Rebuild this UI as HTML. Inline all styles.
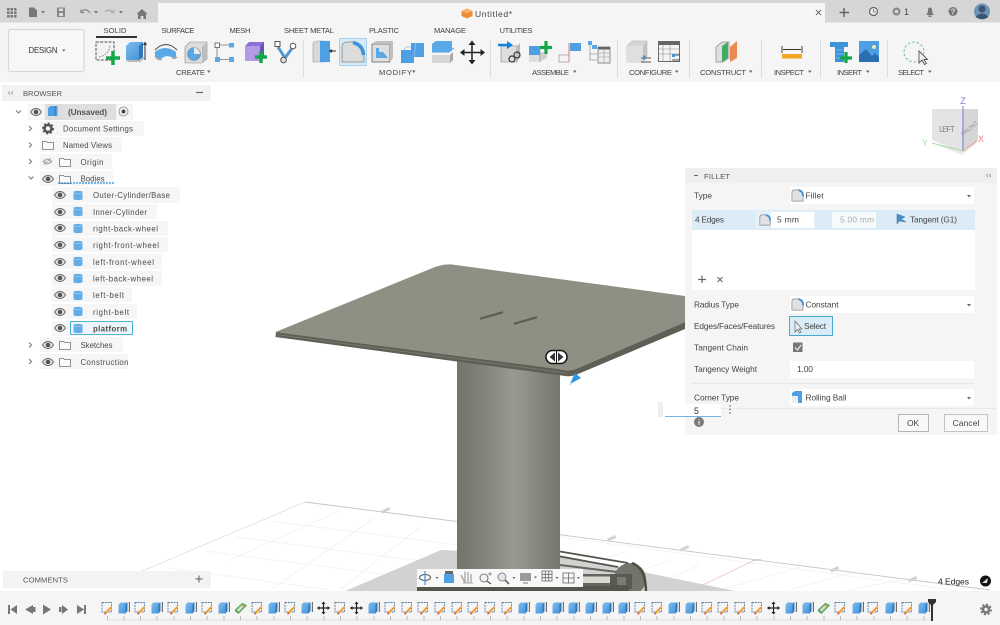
<!DOCTYPE html>
<html><head><meta charset="utf-8"><title>Untitled</title>
<style>
html,body{margin:0;padding:0;background:#fff;overflow:hidden}
svg{display:block}
text{font-family:"Liberation Sans",sans-serif;fill:#444;font-size:7.6px}
.m{text-anchor:middle}
.b{font-size:7.800px;fill:#4a4a4a}
.p{font-size:8.300px;fill:#444}
</style></head><body>
<svg width="1000" height="625" viewBox="0 0 1000 625" xmlns="http://www.w3.org/2000/svg">
<defs>
<linearGradient id="col" x1="0" x2="1" y1="0" y2="0"><stop offset="0" stop-color="#74746c"/><stop offset=".2" stop-color="#7f7f76"/><stop offset=".55" stop-color="#9a9a90"/><stop offset=".8" stop-color="#86867c"/><stop offset="1" stop-color="#77776f"/></linearGradient>
<linearGradient id="blue" x1="0" x2="1" y1="0" y2="1"><stop offset="0" stop-color="#7dbdee"/><stop offset="1" stop-color="#3f8fd6"/></linearGradient>
<symbol id="s" viewBox="0 0 14 14"><rect x="1.5" y="1.5" width="9.5" height="9.5" fill="none" stroke="#5c7fa6" stroke-width=".9" stroke-dasharray="2 .8"/><path d="M5 12L11 6" stroke="#f0a030" stroke-width="2"/><path d="M4 13l1.5-1" stroke="#d9402a" stroke-width="1.5"/></symbol>
<symbol id="e" viewBox="0 0 14 14"><path d="M2 3.5L4 1.500H11V10L9 12.500H2Z" fill="url(#blue)"/><path d="M11 1.500V10L9 12.500V3.500Z" fill="#2f78b8"/><path d="M12.800 1V11" stroke="#444" stroke-width=".9"/></symbol>
<symbol id="g" viewBox="0 0 14 14"><path d="M2 9L9 2.500L12.500 4.500L5 12Z" fill="#d8d8c8" stroke="#4aa858" stroke-width="1.300"/><path d="M8 3.500L11 6" stroke="#e09040" stroke-width="1.300"/><path d="M2 9.500L5 12" stroke="#3b9a4c" stroke-width="1.500"/></symbol>
<symbol id="mv" viewBox="0 0 14 14"><path d="M7 1V13M1 7H13" stroke="#222" stroke-width="1.200"/><path d="M7 .5L9 3H5ZM7 13.500L9 11H5ZM.5 7L3 5V9ZM13.500 7L11 5V9Z" fill="#222"/></symbol>
<symbol id="eye" viewBox="0 0 12 8"><path d="M.5 4C2.500 1 4 .5 6 .5S9.500 1 11.500 4C9.500 7 8 7.500 6 7.500S2.500 7 .5 4Z" fill="#e8e8e8" stroke="#666" stroke-width="1"/><circle cx="6" cy="4" r="2.300" fill="#555"/></symbol>
<symbol id="cyl" viewBox="0 0 10 11"><path d="M.5 2C.5.500 9.500.500 9.500 2V9C9.500 10.500.5 10.500.5 9Z" fill="#63ace6"/><path d="M.5 2.500C2 4 8 4 9.500 2.500" fill="none" stroke="#9fd0f4" stroke-width=".7"/></symbol>
<symbol id="fold" viewBox="0 0 12 10"><path d="M.5 1.500H4.500L5.500 2.500H11.500V9.500H.5Z" fill="#fafafa" stroke="#777" stroke-width=".8"/></symbol>
<symbol id="fil" viewBox="0 0 14 14"><path d="M1 13V4Q1 1 4 1H8Q13 2 13 8V13Z" fill="#e2e2e2" stroke="#8a8a8a" stroke-width=".8"/><path d="M8 1.300Q13 2 13 8" fill="none" stroke="#3f93d8" stroke-width="2"/></symbol>
</defs>

<!-- background top -->
<rect width="1000" height="82" fill="#f5f5f5"/>
<rect width="1000" height="22.500" fill="#d6d6d6"/>
<rect x="158" y="3" width="667" height="20" fill="#f6f6f6"/>

<!-- top bar left icons -->
<g fill="#777">
<rect x="7" y="8" width="2.500" height="2.500"/><rect x="10.500" y="8" width="2.500" height="2.500"/><rect x="14" y="8" width="2.500" height="2.500"/>
<rect x="7" y="11.500" width="2.500" height="2.500"/><rect x="10.500" y="11.500" width="2.500" height="2.500"/><rect x="14" y="11.500" width="2.500" height="2.500"/>
<rect x="7" y="15" width="2.500" height="2.500"/><rect x="10.500" y="15" width="2.500" height="2.500"/><rect x="14" y="15" width="2.500" height="2.500"/>
<path d="M29 7.500H34L37 10.500V17H29Z"/><path d="M41 11H45L43 13.500Z"/>
<path d="M57 7.500H65V17H57Z" fill="#888"/><rect x="59" y="8.500" width="4" height="2.500" fill="#ddd"/><rect x="59" y="13" width="4" height="3" fill="#ddd"/>
<path d="M94 11H98L96 13.500ZM119 11H123L121 13.500Z"/>
</g>
<path d="M81 12Q86 7 90 13M81 9.500V12.500H84" fill="none" stroke="#888" stroke-width="1.200"/>
<path d="M114 13Q109 8 105 12M114 9.500V12.500H111" fill="none" stroke="#aaa" stroke-width="1.200"/>
<path d="M142 9L147.500 14H146V19H143.500V16H140.500V19H138V14H136.500Z" fill="#777"/>

<!-- title -->
<path d="M467 8.500L472.500 11V16L467 18.500L461.500 16V11Z" fill="#ef8e30"/><path d="M461.500 11L467 13.500L472.500 11L467 8.500Z" fill="#f7b267"/>
<text x="475" y="17" style="font-size:8.500px" textLength="37">Untitled*</text>
<path d="M816 10L821 15M821 10L816 15" stroke="#666" stroke-width=".9"/>

<!-- top right -->
<path d="M844 8V17M839.500 12.500H849" stroke="#666" stroke-width="1.500"/>
<circle cx="873.500" cy="11.500" r="4" fill="#ececec" stroke="#666" stroke-width="1.200"/><path d="M873.500 9V12H876" stroke="#666" fill="none" stroke-width=".8"/>
<circle cx="896.500" cy="11.500" r="4" fill="#8a8a8a"/><circle cx="896.500" cy="11.500" r="1.800" fill="#d6d6d6"/>
<text x="904" y="15" style="font-size:9px">1</text>
<path d="M926 15Q928 13 928 10Q928 7.500 930 7.500Q932 7.500 932 10Q932 13 934 15ZM928.500 15.500H931.500V17H928.500Z" fill="#777"/>
<circle cx="953" cy="11.500" r="4.500" fill="#777"/><text x="953" y="14.500" class="m" style="font-size:8px;fill:#ddd;font-weight:bold">?</text>
<circle cx="982" cy="11.500" r="8" fill="#6d93b8"/><circle cx="982" cy="9" r="3.500" fill="#3c5470"/><path d="M975.500 17Q982 10 988.500 17Q982 21 975.500 17Z" fill="#3c5470"/>

<!-- design button -->
<rect x="8.500" y="29.500" width="75.500" height="42" rx="2" fill="#f7f7f7" stroke="#d8d8d8" stroke-width="1.200"/>
<text x="28.500" y="53" style="font-size:7.800px;fill:#333" textLength="29">DESIGN</text>
<path d="M62 49.500H65.500L63.750 51.500Z" fill="#666"/>

<!-- tabs -->
<text x="103.500" y="33" textLength="23">SOLID</text>
<rect x="96" y="36" width="41" height="2" fill="#333"/>
<text x="161.500" y="33" textLength="33">SURFACE</text>
<text x="229.500" y="33" textLength="21">MESH</text>
<text x="284" y="33" textLength="50">SHEET METAL</text>
<text x="369" y="33" textLength="30">PLASTIC</text>
<text x="434" y="33" textLength="32">MANAGE</text>
<text x="499.500" y="33" textLength="33">UTILITIES</text>

<!-- group labels -->
<text x="176" y="75" textLength="29">CREATE</text><path d="M207 70.500H210.500L208.750 73Z" fill="#666"/>
<text x="379" y="75" textLength="33">MODIFY</text><path d="M412 70.500H415.500L413.750 73Z" fill="#666"/>
<text x="532" y="75" textLength="37">ASSEMBLE</text><path d="M573 70.500H576.500L574.750 73Z" fill="#666"/>
<text x="629" y="75" textLength="43">CONFIGURE</text><path d="M675 70.500H678.500L676.750 73Z" fill="#666"/>
<text x="700" y="75" textLength="46">CONSTRUCT</text><path d="M749 70.500H752.500L750.750 73Z" fill="#666"/>
<text x="774" y="75" textLength="30">INSPECT</text><path d="M808 70.500H811.500L809.750 73Z" fill="#666"/>
<text x="837" y="75" textLength="25">INSERT</text><path d="M866 70.500H869.500L867.750 73Z" fill="#666"/>
<text x="898" y="75" textLength="26">SELECT</text><path d="M928 70.500H931.500L929.750 73Z" fill="#666"/>

<!-- dividers -->
<g stroke="#dcdcdc" stroke-width="1"><path d="M303.500 40V78M490.500 40V78M617.500 40V78M689.500 40V78M761.500 40V78M820.500 40V78M887.500 40V78"/></g>

<!-- CREATE icons -->
<rect x="96" y="42" width="18" height="18" fill="#f2f2f2" stroke="#555" stroke-width="1" stroke-dasharray="3 1.200"/>
<path d="M99 57Q109 55 110 45" fill="none" stroke="#888" stroke-width=".8" stroke-dasharray="2 1"/>
<path d="M113 50V64M106 57H120" stroke="#12a84a" stroke-width="3.500" transform="translate(0,1)"/>
<path d="M126 46L130 42H143V57L139 60H126Z" fill="url(#blue)"/><path d="M143 42V57L139 60V46Z" fill="#3176b5"/><path d="M126 60H139L143 57H145V58L140 62H128Z" fill="#bbb"/>
<path d="M145 60V44" stroke="#333" stroke-width="1"/><path d="M145 41.500L147 45H143Z" fill="#333"/>
<path d="M155 50Q166 39 177 50" fill="none" stroke="#444" stroke-width=".9"/>
<path d="M155 52Q165 44 176 52V59Q170 56 166 56L160 59Q156 59 155 56Z" fill="#5aa9e6"/><path d="M155 56Q157 60 162 59.500M172 58Q175 59 177 57" stroke="#aaa" stroke-width="1.500" fill="none"/>
<path d="M185 47L190 42H207V59L202 63H185Z" fill="#dcdcdc" stroke="#888" stroke-width=".6"/><path d="M202 47V63L207 59V42Z" fill="#bdbdbd"/><circle cx="194" cy="54" r="6.500" fill="#5aa9e6" stroke="#888" stroke-width=".6"/><path d="M194 47.500A6.500 6.500 0 0 1 200 54L194 54Z" fill="#e8e8e8"/>
<rect x="215" y="43" width="4.500" height="4.500" fill="#fff" stroke="#555" stroke-width=".8"/><rect x="229" y="43" width="5" height="4.500" fill="#5aa9e6"/><rect x="215" y="57" width="5" height="5" fill="#5aa9e6"/><rect x="229" y="57" width="5" height="5" fill="#5aa9e6"/>
<path d="M220 45H229M217 48V57M220 59.500H229" stroke="#777" stroke-width=".8"/>
<path d="M245 46L249 42H264V58L260 61H245Z" fill="#8e6fd6"/><path d="M245 46H260V61H245Z" fill="#b39ae6"/><path d="M260 46V61L264 58V42Z" fill="#6d4fc0"/>
<path d="M261 51V63M255 57H267" stroke="#12a84a" stroke-width="3.500"/>
<path d="M278 47L285 58M293 47L285 58M285 58V59" stroke="#4f93cf" stroke-width="2.800" fill="none"/>
<rect x="275" y="41.500" width="5" height="5" fill="#fff" stroke="#555"/><circle cx="293" cy="46" r="2.800" fill="#fff" stroke="#555"/><circle cx="283.500" cy="60" r="2.800" fill="#ddd" stroke="#555"/>

<!-- MODIFY icons -->
<path d="M313 44Q313 41 318 41H326V62H313Z" fill="#d8d8d8" stroke="#999" stroke-width=".6"/><path d="M320 41H330V62H320Z" fill="#4e9fe3"/><circle cx="331" cy="51" r="1.500" fill="#333"/><path d="M331 51H336" stroke="#333"/>
<rect x="339.500" y="38.500" width="27" height="27" fill="#d5e9f7" stroke="#a8d2ec"/>
<path d="M342 62V47Q342 42 348 42H354Q364 44 364 54V62Z" fill="#dcdcdc" stroke="#888" stroke-width=".8"/><path d="M353 42.500Q363 45 363.500 55" fill="none" stroke="#3d93da" stroke-width="3.500"/>
<rect x="372" y="44" width="18" height="18" fill="#dedede" stroke="#666" stroke-width=".8"/><path d="M372 44L376 41H393V58L390 62V44Z" fill="#bfbfbf"/><path d="M376 48V58H388L383 52H379V48Z" fill="#5aa9e6"/>
<path d="M401 50H411V43H424V57H414V63H401Z" fill="#4e9fe3"/><path d="M404 50L406 47H411M414 57L416 43" stroke="#8cc4ee" stroke-width=".8" fill="none"/>
<path d="M432 44L436 41H452V49L449 52H432Z" fill="#5aa9e6"/><path d="M432 52H449L454 48" stroke="#4e9fe3" stroke-width="1" fill="none"/><path d="M432 55H450V63H432Z" fill="#d6d6d6"/><path d="M450 55L453 52V60L450 63Z" fill="#aaa"/>
<path d="M472 42V63M461 52.500H484" stroke="#222" stroke-width="1.500"/><path d="M472 40.500L475.500 45H468.500ZM472 64.500L475.500 60H468.500ZM460 52.500L464.500 49V56ZM485 52.500L480.500 49V56Z" fill="#222"/>

<!-- ASSEMBLE icons -->
<path d="M501 46H517V62H501Z" fill="#dedede" stroke="#888" stroke-width=".6"/><path d="M517 46L520 43V57L517 62Z" fill="#bbb"/>
<path d="M498 45H510" stroke="#1583dc" stroke-width="2.500"/><path d="M513 45L507 41V49Z" fill="#1583dc"/>
<circle cx="512" cy="59" r="3" fill="none" stroke="#333" stroke-width="1.200"/><circle cx="517" cy="55" r="3" fill="none" stroke="#333" stroke-width="1.200"/>
<path d="M529 48H539V62H529Z" fill="#dedede"/><path d="M539 52H547V58L539 62Z" fill="#cfcfcf"/><path d="M529 46H540V55H529Z" fill="#4e9fe3"/><path d="M540 48V62" stroke="#888" stroke-width=".5"/>
<path d="M546 41V54M540 47.500H552" stroke="#12a84a" stroke-width="3.200"/>
<rect x="559" y="55" width="10" height="7" fill="#f4f4f4" stroke="#888" stroke-width=".6"/><path d="M569 43V62" stroke="#e2786e" stroke-width="1"/><rect x="570" y="43" width="11" height="8" fill="#4e9fe3"/>
<rect x="588" y="41" width="4" height="4" fill="#5aa9e6"/><rect x="592" y="45" width="5" height="4" fill="#5aa9e6"/><path d="M590 45V60H597M590 54H597" stroke="#999" stroke-width=".8" fill="none"/>
<rect x="598" y="47" width="12" height="16" fill="#eee" stroke="#777" stroke-width=".8"/><rect x="598" y="47" width="12" height="2.500" fill="#666"/><path d="M598 53H610M598 57H610M604 49V63" stroke="#999" stroke-width=".6"/>

<!-- CONFIGURE icons -->
<path d="M627 46L632 41H647V57L643 62H627Z" fill="#d6d6d6" stroke="#aaa" stroke-width=".5"/><path d="M627 46H643V62H627Z" fill="#dfdfdf"/><path d="M643 46L647 41V57L643 62Z" fill="#c2c2c2"/>
<path d="M641 58H651M641 62H651" stroke="#555" stroke-width="1"/><rect x="643" y="55.500" width="2.500" height="4" fill="#3d93da"/>
<rect x="658.500" y="41.500" width="21" height="20" fill="#f4f4f4" stroke="#666"/><rect x="658.500" y="41.500" width="21" height="3.500" fill="#666"/><path d="M658 49H680M658 54H680M663 45V62M670 45V62" stroke="#888" stroke-width=".6"/>
<path d="M672 55H680M672 60H680" stroke="#555" stroke-width="1"/><rect x="672" y="54" width="3" height="3" fill="#3d93da"/>

<!-- CONSTRUCT -->
<path d="M716 47L722 42H729V58L723 62H716Z" fill="#dedede" stroke="#888" stroke-width=".7"/><path d="M722 46L728 42V58L722 62Z" fill="#3fae63"/>
<path d="M730 47L737 41V58L730 62Z" fill="#e8894f"/>

<!-- INSPECT -->
<rect x="782" y="47" width="20" height="9" fill="#f6f6f6"/><path d="M782 46V53M802 46V53M783 49.500H801" stroke="#333" stroke-width=".9" fill="none"/>
<rect x="782" y="54" width="20" height="4.500" fill="#f0a820"/>

<!-- INSERT -->
<path d="M830 42H848V47H844V62H835V47H830Z" fill="#3d93da"/><path d="M836 50H843M836 54H843M836 58H843" stroke="#8cc4ee" stroke-width=".8"/>
<path d="M846 52V63M840 58H852" stroke="#12a84a" stroke-width="3.200"/>
<rect x="859" y="41" width="20" height="21" fill="#4e9fe3"/><path d="M859 62V55L866 49L872 56L875 53L879 57V62Z" fill="#2b6fb3"/><circle cx="874" cy="47" r="2" fill="#f5e6a8"/>

<!-- SELECT -->
<circle cx="914" cy="52" r="10" fill="none" stroke="#6fc29a" stroke-width="1" stroke-dasharray="2.500 2"/>
<path d="M919 51V63L922 60L924.500 64.500L926.500 63.500L924 59.500H927.500Z" fill="#eee" stroke="#555" stroke-width=".9"/>

<!-- ground grid -->
<g stroke="#f1f1f1" stroke-width=".8" fill="none">
<path d="M270 521L560 558M236 537L700 597M205 551L520 592M170 568L330 590M340 511L230 560M375 518L270 590M420 527L340 590M625 552L500 592M670 560L590 590M700 565L640 590"/>
<path d="M800 567L720 590M850 573L790 590M900 580L850 590M560 537L990 595"/>
</g>
<path d="M305 502L140 572" stroke="#dedede" stroke-width=".8"/>
<path d="M305 502L990 590" stroke="#c4c4c4" stroke-width=".9"/>
<path d="M753 561L688 592" stroke="#f3c4c4" stroke-width=".9"/>
<g fill="#d2d2d2"><rect x="381" y="509" width="9" height="3" transform="rotate(-25 385 510)"/><rect x="607" y="537" width="9" height="3" transform="rotate(-25 611 538)"/><rect x="680" y="547" width="9" height="3" transform="rotate(-25 684 548)"/><rect x="752" y="559" width="9" height="2" /><rect x="830" y="568" width="9" height="3" transform="rotate(-25 834 569)"/><rect x="908" y="578" width="9" height="3" transform="rotate(-25 912 579)"/></g>

<!-- shadow -->
<path d="M343 592L441 550L560 555L740 592Z" fill="#d2d2d2"/>

<!-- mechanism -->
<g>
<ellipse cx="630" cy="579" rx="16" ry="16" fill="#74746c"/>
<path d="M632 563Q646 568 646 592" fill="none" stroke="#4e4e46" stroke-width="2.500"/>
<path d="M560 551.500L628 563M560 556.500L618 567" stroke="#55554d" stroke-width="1.800" fill="none"/>
<path d="M560 565L617 572" stroke="#66665e" stroke-width="2"/>
<rect x="560" y="574" width="52" height="16" fill="#66665e"/>
<rect x="583" y="576.500" width="27" height="6.500" fill="#d9d9d3"/>
<rect x="610" y="574" width="22" height="15" fill="#5a5a52"/>
<rect x="617" y="577" width="9" height="8" fill="#7a7a71"/>
<rect x="417" y="586" width="212" height="5" fill="#55554d"/>
</g>

<!-- column -->
<rect x="457" y="360" width="103" height="209" fill="url(#col)"/>

<!-- platform -->
<path d="M276 332L275.500 337L565 376Q571 377 578 374L685 329V322L578 368Q571 371 565 370Z" fill="#5f5f56"/>
<path d="M276 334.500L566 373" stroke="#76766c" stroke-width="1" fill="none"/>
<path d="M275.500 332L435 267Q444 264 452 264.500L685 296V322L578 368Q571 371 565 370Z" fill="#8f8f84"/>
<path d="M481 318.500L502 312.500M515 323.500L536 317.500" stroke="#5f5f56" stroke-width="2.400" stroke-linecap="round"/>

<!-- drag handle -->
<rect x="546" y="350.500" width="21" height="13" rx="6.500" fill="#fff" stroke="#111" stroke-width="1.500"/>
<path d="M555 352.500V361.500L549.500 357ZM558 352.500V361.500L563.500 357Z" fill="#333"/>
<path d="M556.500 351V363" stroke="#111" stroke-width="1"/>
<path d="M570 384L575 373L581 378Z" fill="#2c93e0"/><path d="M570 385L573 377" stroke="#8cc4ee" stroke-width="1"/>

<!-- viewcube -->
<path d="M932 109L978 109V140L962 152L932 140Z" fill="#e4e4e4"/>
<path d="M962 109H978V140L962 152Z" fill="#d6d6d6"/>
<path d="M932 143L962 155L978 142L962 150Z" fill="#eaeaea"/>
<text x="947" y="132" class="m" style="font-size:8.500px;fill:#8a8a8a" textLength="16">LEFT</text>
<text x="971" y="130" class="m" style="font-size:6px;fill:#999" transform="rotate(-40 971 130)">FRONT</text>
<path d="M963 106V151" stroke="#7a7ae8" stroke-width="1"/><path d="M963 151L977 141" stroke="#ef9a9a" stroke-width="1"/><path d="M963 151L932 143" stroke="#a6dca6" stroke-width="1"/>
<text x="963" y="104" class="m" style="font-size:9px;fill:#7a7ae8">Z</text>
<text x="981" y="142" class="m" style="font-size:9px;fill:#ef7a7a">X</text>
<text x="925" y="146" class="m" style="font-size:9px;fill:#a6dca6">Y</text>

<!-- browser -->
<rect x="2" y="85" width="209" height="16" fill="#f2f2f2"/>
<path d="M10 91.500L8.500 93L10 94.500M13 91.500L11.500 93L13 94.500" fill="none" stroke="#888" stroke-width=".7"/>
<text x="23" y="96" style="fill:#555" textLength="39">BROWSER</text>
<path d="M196 92.500H203" stroke="#666" stroke-width="1.200"/>

<g fill="#f6f6f6">
<rect x="28" y="104" width="105" height="16"/><rect x="40" y="121" width="104" height="15"/><rect x="40" y="137" width="82" height="15"/><rect x="40" y="154" width="72" height="15"/><rect x="40" y="171" width="73" height="15"/>
<rect x="52" y="187" width="128" height="16"/><rect x="52" y="204" width="105" height="15"/><rect x="52" y="221" width="116" height="15"/><rect x="52" y="237" width="116" height="15"/><rect x="52" y="254" width="110" height="15"/><rect x="52" y="271" width="110" height="15"/><rect x="52" y="287" width="80" height="15"/><rect x="52" y="304" width="85" height="15"/><rect x="52" y="321" width="80" height="15"/>
<rect x="40" y="337" width="83" height="15"/><rect x="40" y="354" width="88" height="15"/>
</g>
<rect x="45" y="104" width="71" height="16" fill="#dedede"/>

<g fill="none" stroke="#777" stroke-width="1">
<path d="M16 110.500L18.500 113L21 110.500M29 126L31.500 128.500L29 131M29 142.500L31.500 145L29 147.500M29 159L31.500 161.500L29 164M28.500 176.500L31 179L33.500 176.500M29 342.500L31.500 345L29 347.500M29 359L31.500 361.500L29 364"/>
</g>

<use href="#eye" x="30" y="108" width="12" height="8"/>
<path d="M48 108L50.500 106H57.500V116H48Z" fill="#4e9fe3"/><path d="M55 106V116" stroke="#2f78b8"/>
<text x="68" y="115" style="font-size:8.300px;font-weight:bold;fill:#555" textLength="39">(Unsaved)</text>
<circle cx="123.500" cy="111.500" r="4.500" fill="#f5f5f5" stroke="#999"/><circle cx="123.500" cy="111.500" r="2" fill="#444"/>

<circle cx="48" cy="128.500" r="3.500" fill="none" stroke="#555" stroke-width="2.500"/><circle cx="48" cy="128.500" r="5.200" fill="none" stroke="#555" stroke-width="1.500" stroke-dasharray="2 2"/>
<text x="63" y="131.500" class="b" textLength="70">Document Settings</text>
<use href="#fold" x="42" y="140" width="12" height="10"/>
<text x="63" y="148" class="b" textLength="49">Named Views</text>

<path d="M43 161.500Q47 157 52 161.500Q47 166 43 161.500Z" fill="none" stroke="#999" stroke-width=".8"/><circle cx="47.500" cy="161.500" r="2.500" fill="none" stroke="#999" stroke-width=".8"/><path d="M44 165L51 158" stroke="#999" stroke-width=".8"/>
<use href="#fold" x="59" y="157" width="12" height="10"/>
<text x="80.500" y="165" class="b" textLength="23">Origin</text>

<use href="#eye" x="42" y="175" width="12" height="8"/>
<use href="#fold" x="59" y="174" width="12" height="10"/>
<text x="80.500" y="181.500" class="b" textLength="24">Bodies</text>
<path d="M58 183H114" stroke="#2a8fdc" stroke-width="1.200" stroke-dasharray="2 1"/>

<g>
<use href="#eye" x="54" y="191" width="12" height="8"/><use href="#cyl" x="73" y="190" width="10" height="11"/>
<use href="#eye" x="54" y="208" width="12" height="8"/><use href="#cyl" x="73" y="206" width="10" height="11"/>
<use href="#eye" x="54" y="224" width="12" height="8"/><use href="#cyl" x="73" y="223" width="10" height="11"/>
<use href="#eye" x="54" y="241" width="12" height="8"/><use href="#cyl" x="73" y="240" width="10" height="11"/>
<use href="#eye" x="54" y="258" width="12" height="8"/><use href="#cyl" x="73" y="256" width="10" height="11"/>
<use href="#eye" x="54" y="274" width="12" height="8"/><use href="#cyl" x="73" y="273" width="10" height="11"/>
<use href="#eye" x="54" y="291" width="12" height="8"/><use href="#cyl" x="73" y="290" width="10" height="11"/>
<use href="#eye" x="54" y="308" width="12" height="8"/><use href="#cyl" x="73" y="306" width="10" height="11"/>
<use href="#eye" x="54" y="324" width="12" height="8"/>
</g>
<text x="93" y="198" class="b" textLength="77">Outer-Cylinder/Base</text>
<text x="93" y="215" class="b" textLength="54">Inner-Cylinder</text>
<text x="93" y="231.500" class="b" textLength="65">right-back-wheel</text>
<text x="93" y="248" class="b" textLength="66">right-front-wheel</text>
<text x="93" y="265" class="b" textLength="61">left-front-wheel</text>
<text x="93" y="281.500" class="b" textLength="60">left-back-wheel</text>
<text x="93" y="298" class="b" textLength="31">left-belt</text>
<text x="93" y="315" class="b" textLength="36">right-belt</text>
<rect x="70.500" y="321.500" width="62" height="13" fill="#eef5fa" stroke="#4db6d6" stroke-width="1"/>
<use href="#cyl" x="73" y="323" width="10" height="11"/>
<text x="93" y="331.500" class="b" style="font-weight:bold" textLength="34">platform</text>

<use href="#eye" x="42" y="341" width="12" height="8"/><use href="#fold" x="59" y="340" width="12" height="10"/>
<text x="80.500" y="348" class="b" textLength="32">Sketches</text>
<use href="#eye" x="42" y="358" width="12" height="8"/><use href="#fold" x="59" y="357" width="12" height="10"/>
<text x="80.500" y="365" class="b" textLength="48">Construction</text>

<!-- fillet panel -->
<rect x="685" y="168" width="312" height="267" fill="#f5f5f5"/>
<rect x="685" y="168" width="312" height="15" fill="#efefef"/>
<path d="M694 175.500H698" stroke="#666" stroke-width="1"/>
<text x="704" y="179" style="fill:#555" textLength="26">FILLET</text>
<path d="M988 174L986.500 175.500L988 177M991 174L989.500 175.500L991 177" fill="none" stroke="#888" stroke-width=".7"/>
<text x="694" y="198.500" class="p" textLength="18">Type</text>
<rect x="790" y="187" width="184" height="17" fill="#fff"/>
<use href="#fil" x="791" y="189" width="13" height="13"/>
<text x="805.500" y="198.500" class="p" textLength="18">Fillet</text>
<path d="M967 195H971L969 197.500Z" fill="#666"/>

<rect x="692" y="210" width="283" height="80" fill="#fff"/>
<rect x="692" y="210" width="283" height="20" fill="#dcecf7"/>
<text x="695" y="222.500" class="p" textLength="29">4 Edges</text>
<rect x="755" y="211" width="60" height="18" fill="#e4f0f9"/>
<use href="#fil" x="759" y="214" width="12" height="12"/>
<rect x="771" y="212" width="43" height="16" fill="#fff"/>
<text x="777" y="222.500" style="font-size:8.500px" textLength="22">5 mm</text>
<rect x="832" y="212" width="44" height="16" fill="#f7fafc"/>
<text x="840" y="222.500" style="font-size:8.300px;fill:#aaa" textLength="34">5.00 mm</text>
<path d="M897 224V214L905 217L901 219L906 222L899 221Z" fill="#4a8fc8" stroke="#3a6f9c" stroke-width=".5"/>
<text x="910" y="222.500" class="p" textLength="47">Tangent (G1)</text>
<path d="M702 275.500V283M698 279.500H706" stroke="#666" stroke-width="1.200"/>
<path d="M717.500 277L722.500 282M722.500 277L717.500 282" stroke="#666" stroke-width="1"/>

<text x="694" y="307.500" class="p" textLength="45">Radius Type</text>
<rect x="790" y="296" width="184" height="17" fill="#fff"/>
<use href="#fil" x="791" y="298" width="13" height="13"/>
<text x="805.500" y="307.500" class="p" textLength="33">Constant</text>
<path d="M967 304H971L969 306.500Z" fill="#666"/>

<text x="694" y="329" class="p" textLength="81">Edges/Faces/Features</text>
<rect x="789.500" y="316.500" width="43" height="19" fill="#d9ecf7" stroke="#4aa8d0"/>
<path d="M795 321V332L797.500 329.500L799.500 333L801 332L799 329H802Z" fill="#eee" stroke="#666" stroke-width=".7"/>
<text x="804" y="329" class="p" textLength="22">Select</text>

<text x="694" y="350.500" class="p" textLength="54">Tangent Chain</text>
<rect x="793" y="342.500" width="9.500" height="9.500" fill="#777"/>
<path d="M795 347.500L797.500 350L801 345" fill="none" stroke="#eee" stroke-width="1.200"/>

<text x="694" y="372" class="p" textLength="63">Tangency Weight</text>
<rect x="790" y="361" width="184" height="17" fill="#fff"/>
<text x="797" y="372" style="font-size:8.500px" textLength="16">1.00</text>
<path d="M692 383.500H975" stroke="#e8e8e8"/>

<text x="694" y="400.500" class="p" textLength="45">Corner Type</text>
<rect x="790" y="389" width="184" height="17" fill="#fff"/>
<path d="M792 393L795 391H802V403H792Z" fill="#4e9fe3"/><path d="M792 396H798V403H792Z" fill="#eee"/>
<text x="805.500" y="400.500" class="p" textLength="41">Rolling Ball</text>
<path d="M967 397H971L969 399.500Z" fill="#666"/>
<path d="M685 408.500H997" stroke="#e8e8e8"/>

<circle cx="699" cy="422" r="5" fill="#7a7a7a"/><text x="699" y="425" class="m" style="font-size:7.500px;font-weight:bold;fill:#eee">i</text>
<rect x="898.500" y="414.500" width="30" height="17" fill="#f8f8f8" stroke="#b5b5b5"/>
<text x="907" y="426" style="font-size:8.500px" textLength="12">OK</text>
<rect x="944.500" y="414.500" width="43" height="17" fill="#f8f8f8" stroke="#c2c2c2"/>
<text x="952.500" y="426" style="font-size:8.500px" textLength="27">Cancel</text>

<!-- numeric input -->
<rect x="658" y="402" width="5" height="15" fill="#eee"/>
<rect x="665" y="404" width="56" height="13" fill="#fff"/>
<path d="M665 416.500H721" stroke="#6db8e0" stroke-width="1"/>
<text x="694" y="414" style="font-size:8.800px;fill:#333">5</text>
<g fill="#666"><circle cx="730" cy="406" r=".8"/><circle cx="730" cy="409.500" r=".8"/><circle cx="730" cy="413" r=".8"/></g>

<!-- nav bar -->
<rect x="417" y="569" width="166" height="18" fill="#f8f8f8"/>
<ellipse cx="425" cy="577.500" rx="5.500" ry="3" fill="none" stroke="#555" stroke-width="1"/><path d="M425 571V585" stroke="#3d93da" stroke-width="1.200"/>
<path d="M435.500 577H438.500L437 579Z" fill="#666"/>
<rect x="444" y="574" width="10" height="9" fill="#4e9fe3"/><path d="M445 574V571H453V574" fill="#666"/>
<path d="M465 583L461 575M465 583V571.500M468 583V572M471 583V574" stroke="#aaa" stroke-width="1.400" fill="none"/><path d="M463 583H473" stroke="#aaa"/>
<circle cx="484" cy="578" r="4" fill="#f2f2f2" stroke="#777"/><path d="M487 581L491 584" stroke="#555" stroke-width="1.200"/><path d="M490 572V576M488 574H492" stroke="#777" stroke-width=".7"/>
<circle cx="502" cy="577" r="4" fill="#dfe8ef" stroke="#888"/><path d="M505 580L509 584" stroke="#555" stroke-width="1.500"/>
<path d="M512.500 577H515.500L514 579Z" fill="#666"/>
<rect x="520" y="573" width="11" height="8" fill="#9a9a9a"/><path d="M523 583H528" stroke="#777"/>
<path d="M534 576.500H537L535.500 578.500Z" fill="#666"/>
<path d="M542 571H552V581H542ZM545.300 571V581M548.700 571V581M542 574.300H552M542 577.700H552" fill="none" stroke="#666" stroke-width=".8"/>
<path d="M555.500 577H558.500L557 579Z" fill="#666"/>
<path d="M563 573H574V583H563ZM568.500 573V583M563 578H574" fill="none" stroke="#666" stroke-width=".8"/>
<path d="M577 577H580L578.500 579Z" fill="#666"/>

<!-- comments -->
<rect x="3" y="571" width="208" height="17" fill="#f3f3f3"/>
<text x="23" y="582.500" style="fill:#555" textLength="45">COMMENTS</text>
<path d="M199 575.500V582.500M195.500 579H202.500" stroke="#777" stroke-width="1.200"/>

<!-- 4 edges -->
<text x="938" y="584.500" style="font-size:8.500px;fill:#222" textLength="31">4 Edges</text>
<circle cx="985.500" cy="581" r="5.500" fill="#111"/><path d="M982 583L988 578L987 583Z" fill="#ddd"/>

<!-- timeline bar -->
<rect y="591" width="1000" height="34" fill="#f5f5f5"/>
<g fill="#777">
<path d="M8 605V614H10V605ZM17 605V614L10.500 609.500Z"/>
<path d="M33 605V614L25 609.500Z" /><rect x="33" y="607" width="2.500" height="5"/>
<path d="M43 604.500V614.500L51 609.500Z"/>
<path d="M62 605V614L68 609.500Z"/><rect x="59" y="607" width="2.500" height="5"/>
<path d="M77 605V614L84 609.500ZM84 605V614H86V605Z"/>
</g>
<path d="M107 620H932" stroke="#ddd" stroke-width="1"/>
<g stroke="#bbb" stroke-width="1"><path d="M107.500 616V620M124 616V620M140.500 616V620M157 616V620M174 616V620M190.500 616V620M207 616V620M224 616V620M240.500 616V620M257 616V620M274 616V620M290.500 616V620M307 616V620M324 616V620M340.500 616V620M357 616V620M374 616V620M390.500 616V620M407 616V620M424 616V620M440.500 616V620M457 616V620M474 616V620M490.500 616V620M507 616V620M524 616V620M540.500 616V620M557 616V620M574 616V620M590.500 616V620M607 616V620M624 616V620M640.500 616V620M657 616V620M674 616V620M690.500 616V620M707 616V620M724 616V620M740.500 616V620M757 616V620M774 616V620M790.500 616V620M807 616V620M824 616V620M840.500 616V620M857 616V620M874 616V620M890.500 616V620M907 616V620M924 616V620"/></g>
<g>
<use href="#s" x="100.500" y="601" width="14" height="14"/><use href="#e" x="116.500" y="601" width="14" height="14"/>
<use href="#s" x="133.500" y="601" width="14" height="14"/><use href="#e" x="149.500" y="601" width="14" height="14"/>
<use href="#s" x="166.500" y="601" width="14" height="14"/><use href="#e" x="183.500" y="601" width="14" height="14"/>
<use href="#s" x="200.500" y="601" width="14" height="14"/><use href="#e" x="216.500" y="601" width="14" height="14"/>
<use href="#g" x="233.500" y="601" width="14" height="14"/>
<use href="#s" x="250.500" y="601" width="14" height="14"/><use href="#e" x="266.500" y="601" width="14" height="14"/>
<use href="#s" x="283.500" y="601" width="14" height="14"/><use href="#e" x="299.500" y="601" width="14" height="14"/>
<use href="#mv" x="316.500" y="601" width="14" height="14"/>
<use href="#s" x="333.500" y="601" width="14" height="14"/><use href="#mv" x="349.500" y="601" width="14" height="14"/>
<use href="#e" x="366.500" y="601" width="14" height="14"/>
<use href="#s" x="383.500" y="601" width="14" height="14"/><use href="#s" x="400.500" y="601" width="14" height="14"/><use href="#s" x="416.500" y="601" width="14" height="14"/>
<use href="#s" x="433.500" y="601" width="14" height="14"/><use href="#s" x="450.500" y="601" width="14" height="14"/><use href="#s" x="466.500" y="601" width="14" height="14"/>
<use href="#s" x="483.500" y="601" width="14" height="14"/><use href="#s" x="500.500" y="601" width="14" height="14"/>
<use href="#e" x="516.500" y="601" width="14" height="14"/><use href="#e" x="533.500" y="601" width="14" height="14"/><use href="#e" x="550.500" y="601" width="14" height="14"/>
<use href="#e" x="566.500" y="601" width="14" height="14"/><use href="#e" x="583.500" y="601" width="14" height="14"/><use href="#e" x="600.500" y="601" width="14" height="14"/>
<use href="#e" x="616.500" y="601" width="14" height="14"/>
<use href="#s" x="633.500" y="601" width="14" height="14"/><use href="#s" x="650.500" y="601" width="14" height="14"/>
<use href="#e" x="666.500" y="601" width="14" height="14"/><use href="#e" x="683.500" y="601" width="14" height="14"/>
<use href="#s" x="700.500" y="601" width="14" height="14"/><use href="#s" x="716.500" y="601" width="14" height="14"/><use href="#s" x="733.500" y="601" width="14" height="14"/><use href="#s" x="750.500" y="601" width="14" height="14"/>
<use href="#mv" x="766.500" y="601" width="14" height="14"/>
<use href="#e" x="783.500" y="601" width="14" height="14"/><use href="#e" x="800.500" y="601" width="14" height="14"/>
<use href="#g" x="816.500" y="601" width="14" height="14"/>
<use href="#s" x="833.500" y="601" width="14" height="14"/><use href="#e" x="850.500" y="601" width="14" height="14"/>
<use href="#s" x="866.500" y="601" width="14" height="14"/><use href="#e" x="883.500" y="601" width="14" height="14"/>
<use href="#s" x="900.500" y="601" width="14" height="14"/><use href="#e" x="916.500" y="601" width="14" height="14"/>
</g>
<path d="M928 599H936V602L933 605V621H931V605L928 602Z" fill="#333"/>
<circle cx="986" cy="609.500" r="3" fill="none" stroke="#777" stroke-width="2.500"/><circle cx="986" cy="609.500" r="5" fill="none" stroke="#777" stroke-width="1.800" stroke-dasharray="2.200 1.700"/>
</svg>
</body></html>
